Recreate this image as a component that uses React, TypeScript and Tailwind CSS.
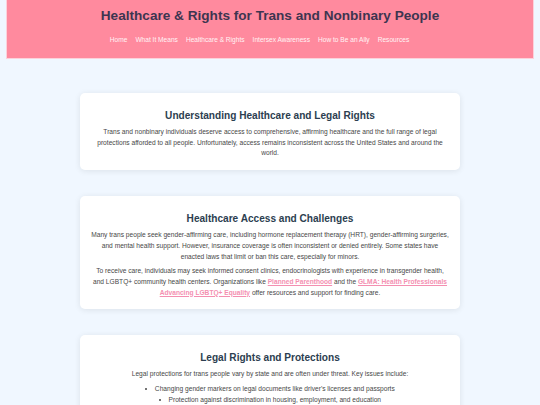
import React from "react";

const navItems = [
  "Home",
  "What It Means",
  "Healthcare & Rights",
  "Intersex Awareness",
  "How to Be an Ally",
  "Resources",
];

function Card({ title, children }: { title: string; children: React.ReactNode }) {
  return (
    <section className="rounded-[5px] bg-white px-[8.25px] pt-4 pb-[11px] text-center shadow-[0_1px_6px_rgba(0,0,0,0.09)]">
      <h2 className="mb-[4px] text-[10.1px] leading-[14px] font-bold text-[#2c3e50]">{title}</h2>
      {children}
    </section>
  );
}

export default function App() {
  return (
    <div
      className="min-h-[405px] bg-[#f0f7ff] px-[7px]"
      style={{ fontFamily: '"Liberation Sans", Arial, sans-serif' }}
    >
      <header className="flex h-[58px] flex-col items-center bg-[#ff8a9e] pt-[7px] shadow-[0_0_0_1px_rgba(255,200,210,0.8)]">
        <h1 className="text-[13.6px] leading-[18px] font-bold text-[#3d3550]">
          Healthcare &amp; Rights for Trans and Nonbinary People
        </h1>
        <nav className="mt-[10px] mr-[21px] flex gap-[8px] text-[6.6px] leading-[10px] text-[#fff3f5]">
          {navItems.map((item) => (
            <a key={item} href="#">
              {item}
            </a>
          ))}
        </nav>
      </header>

      <main className="mx-auto mt-[35px] flex w-[380px] flex-col gap-[26px] text-[6.63px] leading-[10.7px] text-[#474747]">
        <Card title="Understanding Healthcare and Legal Rights">
          <p>
            Trans and nonbinary individuals deserve access to comprehensive, affirming healthcare and the full
            range of legal protections afforded to all people. Unfortunately, access remains inconsistent across
            the United States and around the world.
          </p>
        </Card>

        <Card title="Healthcare Access and Challenges">
          <p className="mb-[4px]">
            Many trans people seek gender-affirming care, including hormone replacement therapy (HRT),
            gender-affirming surgeries,
            <br />
            and mental health support. However, insurance coverage is often inconsistent or denied entirely. Some
            states have
            <br />
            enacted laws that limit or ban this care, especially for minors.
          </p>
          <p>
            To receive care, individuals may seek informed consent clinics, endocrinologists with experience in
            transgender health,
            <br />
            and LGBTQ+ community health centers. Organizations like{" "}
            <a href="#" className="font-bold text-[#f48fb1] underline">
              Planned Parenthood
            </a>{" "}
            and the{" "}
            <a href="#" className="font-bold text-[#f48fb1] underline">
              GLMA: Health Professionals
              <br />
              Advancing LGBTQ+ Equality
            </a>{" "}
            offer resources and support for finding care.
          </p>
        </Card>

        <Card title="Legal Rights and Protections">
          <p className="mb-[4px]">
            Legal protections for trans people vary by state and are often under threat. Key issues include:
          </p>
          <ul className="list-inside list-disc">
            <li>Changing gender markers on legal documents like driver's licenses and passports</li>
            <li>Protection against discrimination in housing, employment, and education</li>
            <li>Access to gender-affirming care for youth and adults</li>
            <li>Recognition of nonbinary identities on official documents</li>
          </ul>
        </Card>
      </main>
    </div>
  );
}
